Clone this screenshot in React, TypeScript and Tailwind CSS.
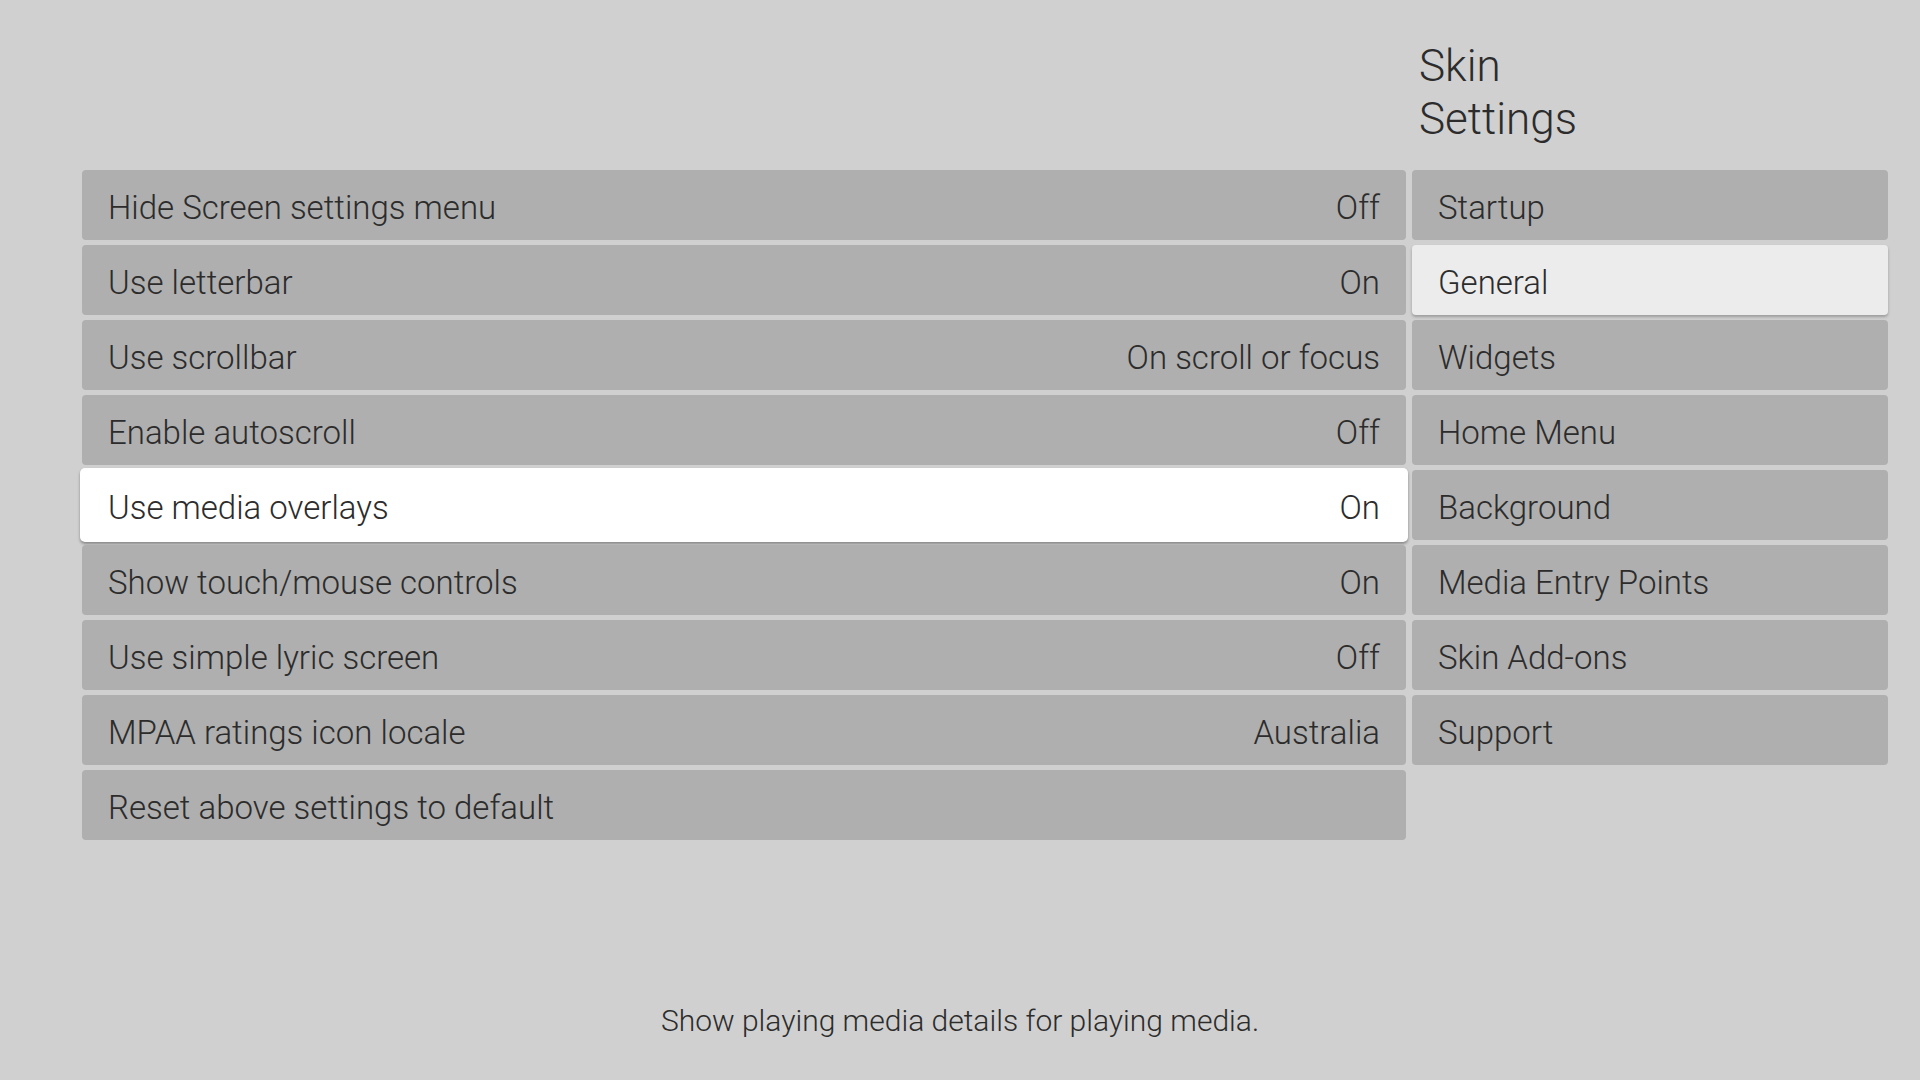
const settings: { label: string; value?: string; focused?: boolean }[] = [
  { label: 'Hide Screen settings menu', value: 'Off' },
  { label: 'Use letterbar', value: 'On' },
  { label: 'Use scrollbar', value: 'On scroll or focus' },
  { label: 'Enable autoscroll', value: 'Off' },
  { label: 'Use media overlays', value: 'On', focused: true },
  { label: 'Show touch/mouse controls', value: 'On' },
  { label: 'Use simple lyric screen', value: 'Off' },
  { label: 'MPAA ratings icon locale', value: 'Australia' },
  { label: 'Reset above settings to default' },
];

const categories = [
  'Startup',
  'General',
  'Widgets',
  'Home Menu',
  'Background',
  'Media Entry Points',
  'Skin Add-ons',
  'Support',
];

function SettingRow({ label, value, focused }: { label: string; value?: string; focused?: boolean }) {
  return (
    <div
      className={
        focused
          ? 'flex h-[74px] -mx-[2px] -my-[2px] items-center justify-between rounded-[5px] bg-white px-[28px] pt-[6px] shadow-[0_2px_3px_rgba(0,0,0,0.35)]'
          : 'flex h-[70px] items-center justify-between rounded-[4px] bg-[#afafaf] px-[26px] pt-[6px]'
      }
    >
      <span>{label}</span>
      {value && <span>{value}</span>}
    </div>
  );
}

function CategoryRow({ label, active }: { label: string; active?: boolean }) {
  return (
    <div
      className={
        active
          ? 'flex h-[70px] items-center rounded-[4px] bg-[#ececec] px-[26px] pt-[6px] shadow-[0_2px_3px_rgba(0,0,0,0.25)]'
          : 'flex h-[70px] items-center rounded-[4px] bg-[#afafaf] px-[26px] pt-[6px]'
      }
    >
      <span>{label}</span>
    </div>
  );
}

export default function App() {
  return (
    <div
      className="flex h-[1080px] w-[1920px] flex-col overflow-hidden bg-[#d0d0d0] font-light text-[#2c2c2c]"
      style={{ fontFamily: '"Roboto Light", Roboto, "Noto Sans", sans-serif' }}
    >
      <div className="flex pl-[82px] pr-[32px]">
        <div className="w-[1324px]" />
        <div className="ml-[6px] w-[476px] pl-[7px] pt-[40px] text-[44px] leading-[53px]">
          <div>Skin</div>
          <div>Settings</div>
        </div>
      </div>

      <div className="mt-[24px] flex items-start gap-[6px] pl-[82px] pr-[32px] text-[33px]">
        <div className="flex w-[1324px] flex-col gap-[5px]">
          {settings.map((s) => (
            <SettingRow key={s.label} {...s} />
          ))}
        </div>
        <div className="flex w-[476px] flex-col gap-[5px]">
          {categories.map((c) => (
            <CategoryRow key={c} label={c} active={c === 'General'} />
          ))}
        </div>
      </div>

      <div className="mt-auto pb-[37px] text-center text-[30px]">
        Show playing media details for playing media.
      </div>
    </div>
  );
}
